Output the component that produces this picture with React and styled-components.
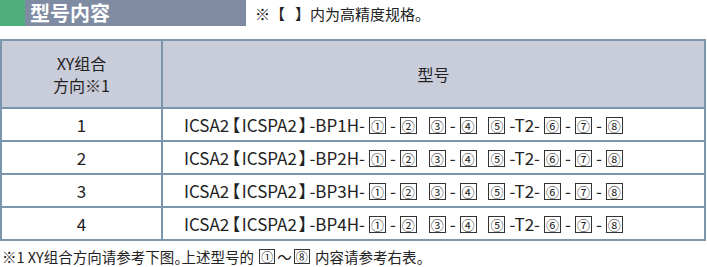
import React from "react";
import styled, { createGlobalStyle } from "styled-components";

const GlobalStyle = createGlobalStyle`
  body {
    margin: 0;
    background: #fff;
    font-family: "Noto Sans CJK SC", "Noto Sans", sans-serif;
    color: #222;
  }
`;

const rows = ["1", "2", "3", "4"];

const Page = styled.div`
  width: 707px;
  height: 267px;
  overflow: hidden;
`;

const TitleRow = styled.div`
  display: flex;
  align-items: center;
  height: 26px;
  margin-bottom: 13px;
`;

const TitleBar = styled.div`
  display: flex;
  align-items: center;
  width: 246px;
  height: 26px;
  background: #7e8ba2;
`;

const TitleMark = styled.div`
  align-self: stretch;
  width: 25px;
  background: #4fb07d;
`;

const TitleText = styled.h2`
  margin: 0 0 0 5px;
  font-size: 20px;
  line-height: 24px;
  font-weight: 700;
  color: #fff;
`;

const Note = styled.span`
  margin-left: 9px;
  font-size: 15px;
  color: #222;
`;

const Table = styled.table`
  width: 706px;
  border-collapse: collapse;
  border: 2px solid #7b95ad;

  th,
  td {
    border: 2px solid #7b95ad;
    font-weight: 400;
    color: #222;
    padding: 0;
  }

  th {
    background: #c9ccd9;
    height: 66px;
    font-size: 16px;
    line-height: 22px;
  }

  td {
    height: 31px;
    font-size: 17px;
  }
`;

const NumCell = styled.td`
  width: 159px;
  text-align: center;
`;

const CodeCell = styled.td`
  padding-left: 21px !important;
  white-space: nowrap;
`;

const Bracket = styled.span`
  font-feature-settings: "palt";
  margin: 0 2px;
`;

const Box = styled.span`
  display: inline-block;
  border: 1px solid #333;
  font-size: ${(p) => (p.small ? "12px" : "13px")};
  line-height: ${(p) => (p.small ? "13px" : "15px")};
  padding: 0 1px;
  margin: ${(p) => (p.small ? "0 2px" : "0 4px")};
  vertical-align: 1px;
`;

const Footnote = styled.p`
  margin: 5px 0 0 2px;
  font-size: 14.5px;
  font-feature-settings: "palt";
  color: #222;
`;

const circled = ["①", "②", "③", "④", "⑤", "⑥", "⑦", "⑧"];

const Code = ({ n }) => (
  <>
    ICSA2<Bracket>【</Bracket>ICSPA2<Bracket>】</Bracket>-BP{n}H-
    <Box>{circled[0]}</Box>-<Box>{circled[1]}</Box>{" "}
    <Box>{circled[2]}</Box>-<Box>{circled[3]}</Box>{" "}
    <Box>{circled[4]}</Box>-T2-<Box>{circled[5]}</Box>-<Box>{circled[6]}</Box>-
    <Box>{circled[7]}</Box>
  </>
);

export default function App() {
  return (
    <Page>
      <GlobalStyle />
      <TitleRow>
        <TitleBar>
          <TitleMark />
          <TitleText>型号内容</TitleText>
        </TitleBar>
        <Note>※【&nbsp;&nbsp;&nbsp;】内为高精度规格。</Note>
      </TitleRow>
      <Table>
        <thead>
          <tr>
            <th>
              XY组合
              <br />
              方向※1
            </th>
            <th>型号</th>
          </tr>
        </thead>
        <tbody>
          {rows.map((n) => (
            <tr key={n}>
              <NumCell>{n}</NumCell>
              <CodeCell>
                <Code n={n} />
              </CodeCell>
            </tr>
          ))}
        </tbody>
      </Table>
      <Footnote>
        ※1 XY组合方向请参考下图。上述型号的 <Box small>①</Box>～<Box small>⑧</Box> 内容请参考右表。
      </Footnote>
    </Page>
  );
}
